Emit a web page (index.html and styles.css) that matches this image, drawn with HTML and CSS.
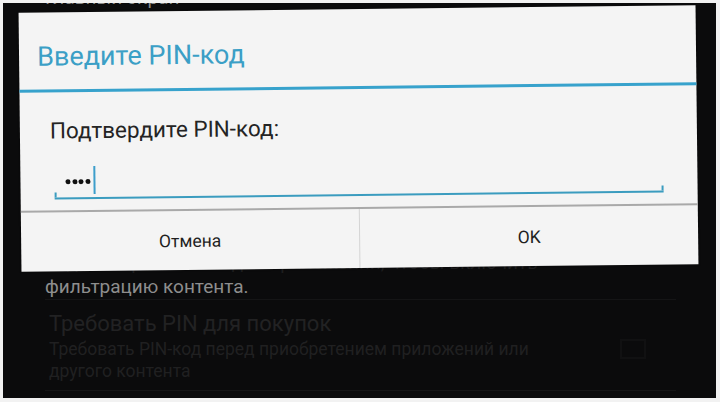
FILE: index.html
```html
<!DOCTYPE html>
<html lang="ru">
<head>
<meta charset="utf-8">
<link rel="stylesheet" href="styles.css">
</head>
<body>
<div class="frame">
  <div class="screen">
    <div class="list">
      <div class="item first">
        <div class="sub top">Главный экран</div>
      </div>
      <div class="item hidden">
        <div class="sub">Задать ограничения для приложений, чтобы включить</div>
        <div class="sub light">фильтрацию контента.</div>
      </div>
      <div class="item dim">
        <div class="row">
          <div class="texts">
            <div class="head">Требовать PIN для покупок</div>
            <div class="sub">Требовать PIN-код перед приобретением приложений или</div>
            <div class="sub">другого контента</div>
          </div>
          <div class="check"></div>
        </div>
      </div>
    </div>
  </div>
  <div class="dialog">
    <div class="title">Введите PIN-код</div>
    <div class="body">
      <div class="label">Подтвердите PIN-код:</div>
      <div class="field">
        <span class="dots"><i></i><i></i><i></i><i></i></span><span class="cursor"></span>
      </div>
    </div>
    <div class="buttons">
      <div class="btn">Отмена</div>
      <div class="btn">OK</div>
    </div>
  </div>
</div>
</body>
</html>
```

FILE: styles.css
```css
html, body {
  margin: 0;
  padding: 0;
  background: #f2f2f2;
}
body {
  width: 720px;
  height: 402px;
  overflow: hidden;
  font-family: Roboto, "Noto Sans", sans-serif;
}
.frame {
  position: relative;
  width: 720px;
  height: 402px;
  padding: 3px 4px 4px 3px;
  box-sizing: border-box;
}
.screen {
  width: 100%;
  height: 100%;
  background: #0b0b0c;
  overflow: hidden;
}
.list {
  display: flex;
  flex-direction: column;
  padding: 0 40px 0 42px;
}
.item {
  border-bottom: 1px solid #151516;
}
.item.first {
  margin-top: -17px;
  height: 72px;
}
.sub {
  font-size: 19px;
  line-height: 24px;
  color: #1e1e1f;
}
.sub.top {
  color: #8a8a8a;
}
.item.hidden {
  margin-top: 192px;
  padding-bottom: 0;
}
.sub.light {
  color: #8e8e8e;
}
.item.dim {
  padding: 10px 0 8px 4px;
}
.row {
  display: flex;
  align-items: center;
  justify-content: space-between;
}
.head {
  font-size: 22px;
  line-height: 28px;
  color: #222223;
}
.item.dim .sub {
  font-size: 17.5px;
  line-height: 22px;
  color: #202021;
}
.check {
  width: 22px;
  height: 16px;
  border: 2px solid #111112;
  margin-right: 30px;
  margin-top: 6px;
}
.dialog {
  position: absolute;
  left: 20px;
  top: 9px;
  width: 677px;
  height: 259px;
  background: #f4f4f4;
  transform: rotate(-0.65deg);
  display: flex;
  flex-direction: column;
  box-shadow: 0 0 2px rgba(0,0,0,0.6);
}
.title {
  height: 80px;
  box-sizing: border-box;
  padding: 28px 0 0 18px;
  font-size: 27px;
  line-height: 32px;
  color: #3b9fc6;
  border-bottom: 3px solid #37a2cc;
}
.body {
  flex: 1;
  padding: 25px 34px 0 30px;
  border-bottom: 2px solid #a9a9a9;
}
.label {
  font-size: 22.5px;
  line-height: 26px;
  color: #242424;
}
.field {
  margin-top: 20px;
  margin-left: 4px;
  height: 34px;
  border-bottom: 2px solid #3b9cbf;
  position: relative;
  display: flex;
  align-items: center;
  padding-left: 11px;
}
.field::before, .field::after {
  content: "";
  position: absolute;
  bottom: 0;
  width: 2px;
  height: 5px;
  background: #3b9cbf;
}
.field::before { left: 0; }
.field::after { right: 0; }
.dots {
  display: flex;
  gap: 1.5px;
  margin-top: 3px;
}
.dots i {
  width: 5px;
  height: 5px;
  border-radius: 50%;
  background: #111;
}
.cursor {
  width: 2px;
  height: 28px;
  background: #3d9ecb;
  margin-left: 3px;
}
.buttons {
  height: 59px;
  display: flex;
}
.btn {
  flex: 1;
  display: flex;
  align-items: center;
  justify-content: center;
  font-size: 17.5px;
  color: #1f1f1f;
}
.btn + .btn {
  border-left: 1px solid #d4d4d4;
}
```
